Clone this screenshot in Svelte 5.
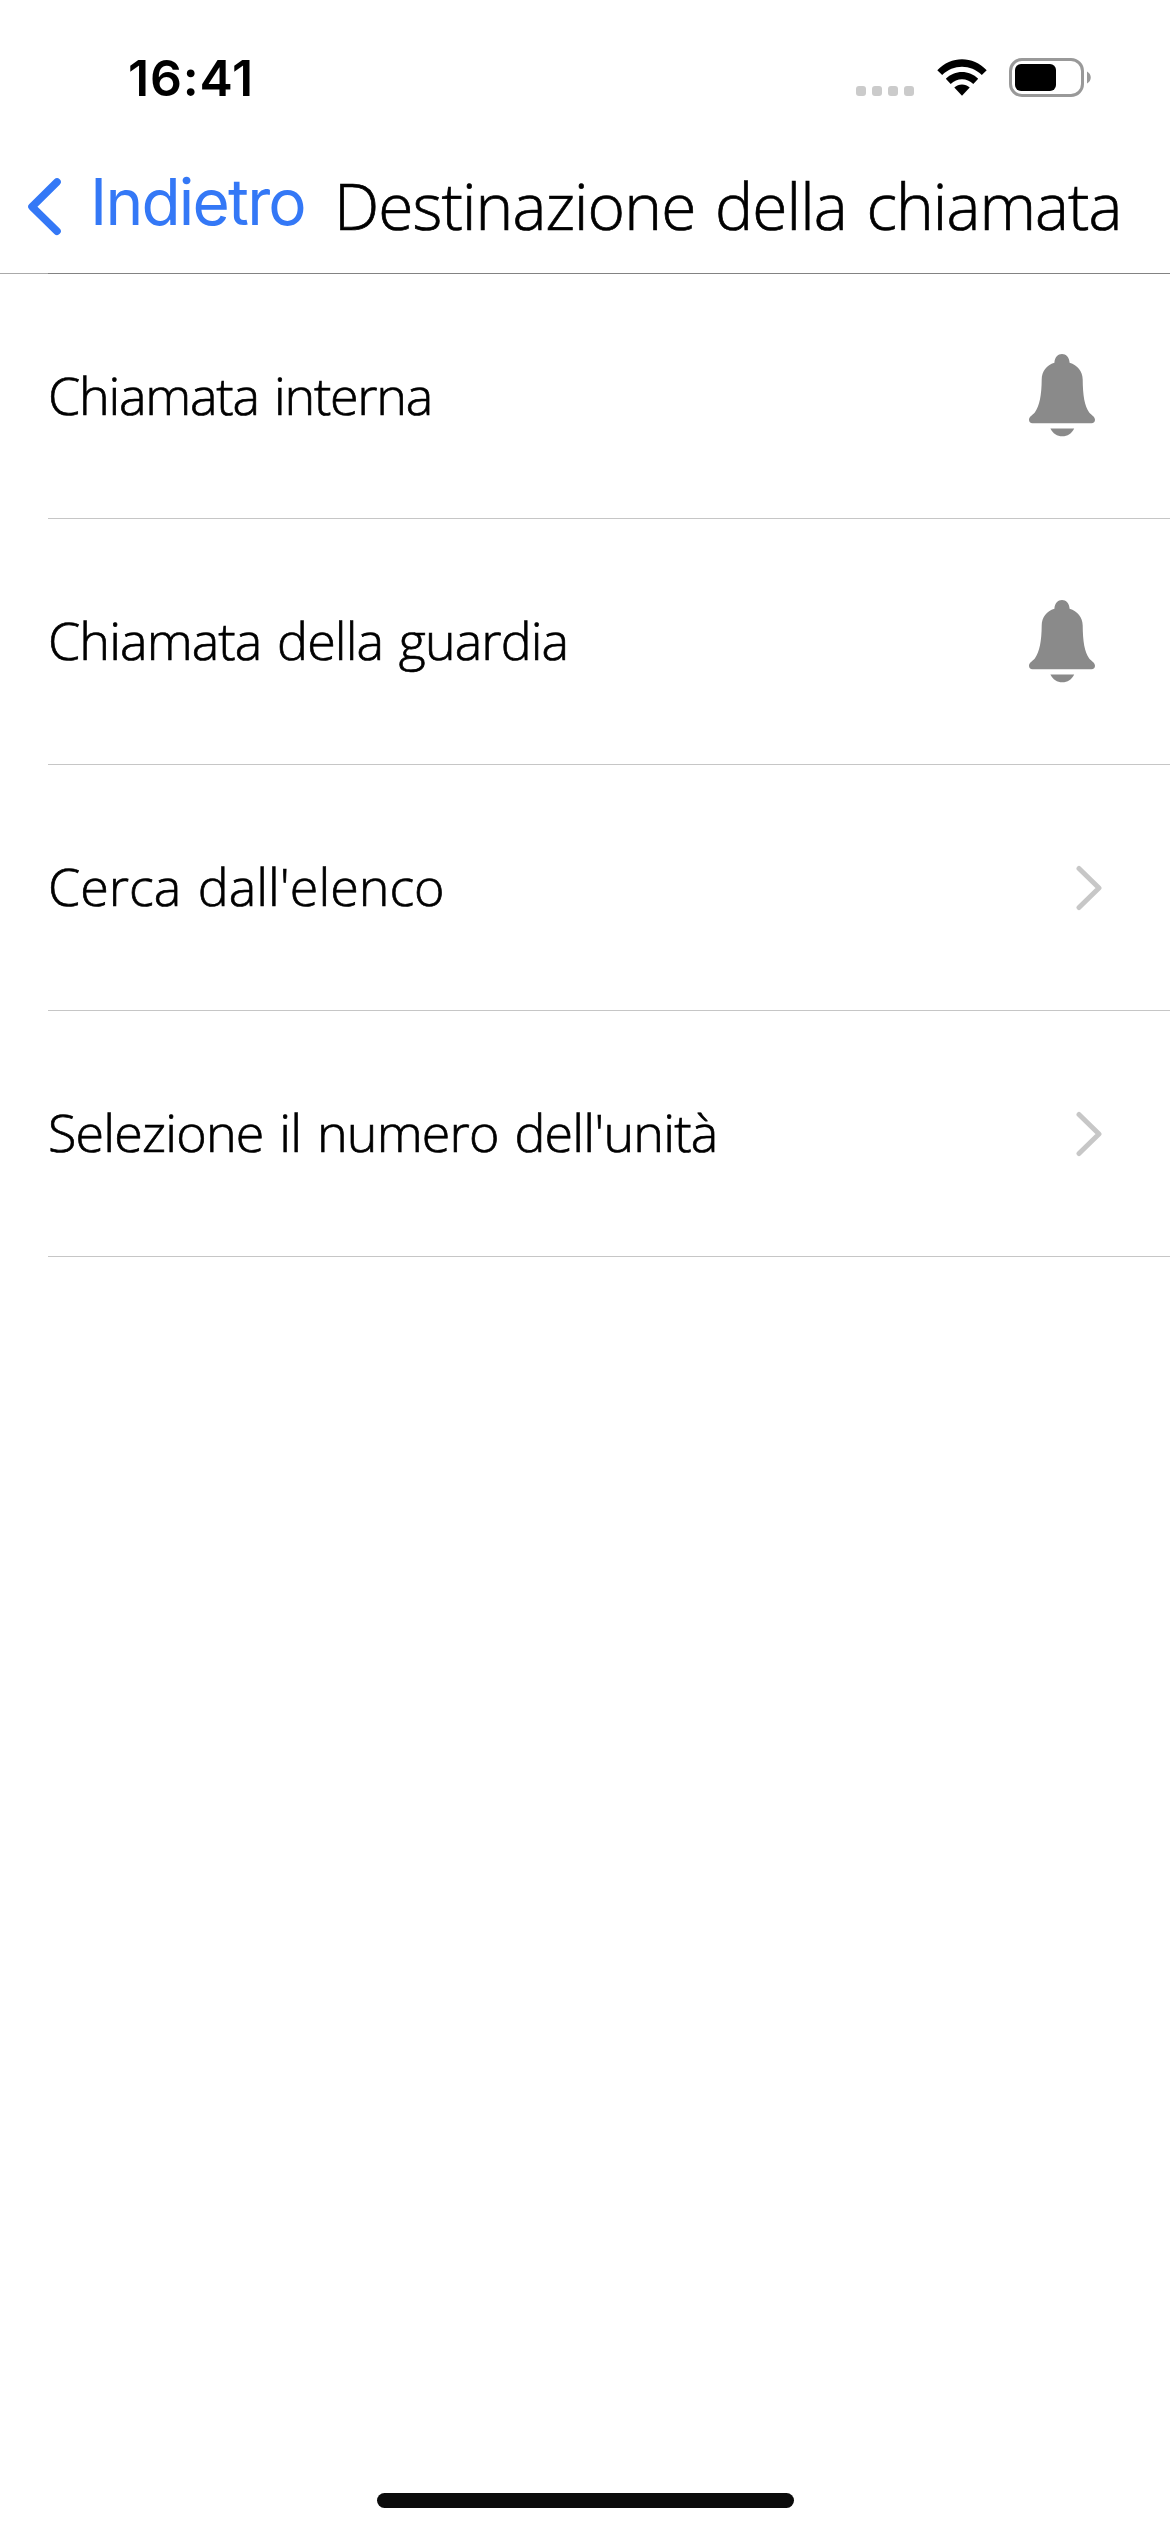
<script>
  const rows = [
    { label: "Chiamata interna", icon: "bell", spacing: -1.25 },
    { label: "Chiamata della guardia", icon: "bell", spacing: -0.9 },
    { label: "Cerca dall'elenco", icon: "chevron", spacing: 0 },
    { label: "Selezione il numero dell'unità", icon: "chevron", spacing: -0.8 },
  ];
</script>

<div class="screen">
  <div class="status-bar">
    <div class="time">16:41</div>
    <div class="indicators">
      <div class="signal">
        <span></span><span></span><span></span><span></span>
      </div>
      <svg class="wifi" width="50" height="38" viewBox="0 0 50 38">
        <path d="M0.3 11.2C14 -3.4 36 -3.4 49.7 11.2L44.8 16C33.8 5 16.2 5 5.2 16Z" />
        <path d="M8.8 19.8C17.8 10.7 32.2 10.7 41.2 19.8L36.3 24.9C30 18.6 20 18.6 13.7 24.9Z" />
        <path d="M17.3 28.6C21.6 24.6 28.4 24.6 32.7 28.6L25 36.8Z" />
      </svg>
      <svg class="battery" width="83" height="40" viewBox="0 0 83 40">
        <rect x="1.5" y="1.5" width="72" height="36" rx="11.5" fill="none" stroke="#999" stroke-width="3" />
        <rect x="6" y="6" width="41" height="27" rx="6" />
        <path d="M78 13.5C83 16 83 23 78 25.5Z" fill="#999" />
      </svg>
    </div>
  </div>

  <div class="nav">
    <a class="back" href="#back">
      <svg width="36" height="60" viewBox="0 0 36 60">
        <path d="M31 5L6 29.7L31 54.2" />
      </svg>
      <span>Indietro</span>
    </a>
    <h1>Destinazione della chiamata</h1>
  </div>
  <div class="nav-line"><div></div></div>

  <ul>
    {#each rows as row}
      <li>
        <span class="label" style="letter-spacing: {row.spacing}px">{row.label}</span>
        {#if row.icon === "bell"}
          <svg class="bell" width="66" height="84" viewBox="0 0 66 84">
            <path
              d="M33 0C37 0 40.3 3.2 40.6 8.8C48.5 11.2 53.6 17.5 53.7 25.5C53.8 41 55.5 52 60.2 58.5C62.5 61.3 66 62.5 66 65.8C66 67.9 64.7 69.2 62.5 69.2H3.5C1.3 69.2 0 67.9 0 65.8C0 62.5 3.5 61.3 5.8 58.5C10.5 52 12.6 41 12.7 25.5C12.8 17.5 17.5 11.2 25.4 8.8C25.7 3.2 29 0 33 0Z"
            />
            <path d="M21.4 74.5H45.2C42.8 79.5 38.5 82.3 33.3 82.3S23.8 79.5 21.4 74.5Z" />
          </svg>
        {:else}
          <svg class="chevron" width="26" height="46" viewBox="0 0 26 46">
            <path d="M3 3.5L23 23L3 42.5" />
          </svg>
        {/if}
      </li>
    {/each}
  </ul>

  <div class="home-indicator"></div>
</div>

<style>
  :global(body) {
    margin: 0;
    background: #fff;
  }

  .screen {
    display: flex;
    flex-direction: column;
    box-sizing: border-box;
    width: 1170px;
    height: 2532px;
    overflow: hidden;
    background: #fff;
    color: #000;
    font-family: "Inter", sans-serif;
  }

  .status-bar {
    display: flex;
    justify-content: space-between;
    box-sizing: border-box;
    height: 141px;
    padding: 58px 78px 0 128px;
  }

  .time {
    font-size: 50px;
    font-weight: 600;
    line-height: 40px;
    letter-spacing: 0.8px;
  }

  .indicators {
    display: flex;
    align-items: flex-start;
  }

  .signal {
    display: flex;
    gap: 6px;
    margin: 28px 23px 0 0;
  }

  .signal span {
    width: 10px;
    height: 10px;
    border-radius: 3px;
    background: #cbcbcb;
  }

  .wifi {
    margin: 1px 22px 0 0;
  }

  .nav {
    display: flex;
    align-items: flex-start;
    height: 132px;
    padding-left: 26px;
    white-space: nowrap;
  }

  .back {
    display: flex;
    width: 308px;
    color: #3478f6;
    font-size: 64px;
    line-height: 60px;
    text-decoration: none;
  }

  .back svg {
    margin: 36px 28px 0 0;
    fill: none;
    stroke: currentColor;
    stroke-width: 7.6;
    stroke-linecap: round;
    stroke-linejoin: round;
  }

  .back span {
    margin-top: 31px;
    letter-spacing: -1.8px;
  }

  h1 {
    margin: 35px 0 0;
    font-family: "Open Sans", sans-serif;
    font-size: 64px;
    font-weight: 300;
    line-height: 60px;
    letter-spacing: -0.9px;
    word-spacing: 4px;
    -webkit-text-stroke: 0.7px #000;
  }

  .nav-line {
    height: 1px;
    padding-left: 48px;
    background: #aaa;
  }

  .nav-line div {
    height: 1px;
    background: #838383;
  }

  ul {
    flex: 1;
    margin: 0 0 0 48px;
    padding: 0;
    list-style: none;
  }

  li {
    display: flex;
    align-items: center;
    justify-content: space-between;
    box-sizing: border-box;
    height: 246px;
    padding-right: 75px;
    border-bottom: 1px solid #c6c6c6;
  }

  li:first-child {
    height: 245px;
  }

  .label {
    margin-bottom: 3px;
    font-family: "Open Sans", sans-serif;
    font-size: 52px;
    font-weight: 300;
    line-height: 60px;
    word-spacing: 3px;
    white-space: nowrap;
    -webkit-text-stroke: 0.7px #000;
  }

  .bell {
    fill: #8a8a8a;
  }

  .chevron {
    margin-right: -7px;
    fill: none;
    stroke: #c7c7c7;
    stroke-width: 5;
    stroke-linecap: round;
    stroke-linejoin: round;
  }

  .home-indicator {
    width: 417px;
    height: 15px;
    margin: 0 auto 24px 377px;
    border-radius: 8px;
    background: #0b0b0b;
  }
</style>
